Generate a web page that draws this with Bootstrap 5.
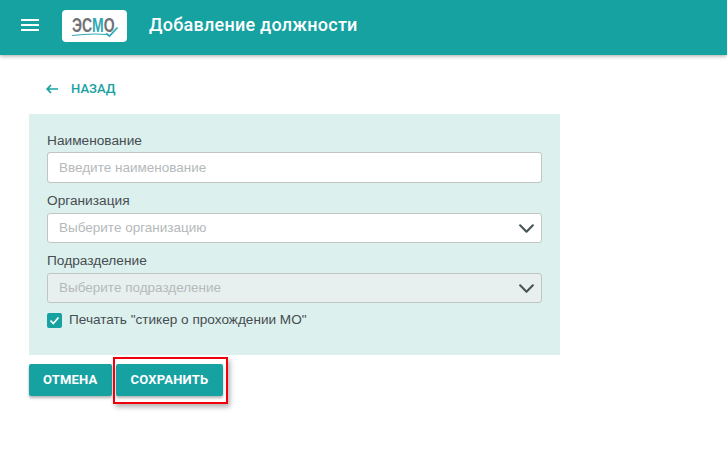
<!DOCTYPE html>
<html lang="ru">
<head>
<meta charset="utf-8">
<title>Добавление должности</title>
<link href="https://cdn.jsdelivr.net/npm/bootstrap@5.3.0/dist/css/bootstrap.min.css" rel="stylesheet">
<style>
html, body { height: 100%; }
body { font-family: Roboto, "Liberation Sans", sans-serif; background: #fff; color: #3c4448; overflow: hidden; }
.app-bar { height: 55px; background: #17a2a2; padding: 0 0 3px 21px; gap: 23px; box-shadow: 0 1px 4px rgba(0,0,0,.35); }
.burger { display: block; width: 18px; height: 12px; padding: 0; border: 0; background: none; margin-bottom: 2px; }
.logo-tile { display: block; width: 65px; height: 32px; background: #fff; border-radius: 4px; }
.app-title { font-size: 18px; font-weight: 500; color: #fff; margin: 0 0 2px -1px; line-height: 1; letter-spacing: .25px; }
.page-body { padding: 0 0 0 29px; width: 560px; }
.back-link { color: #17a2a2; font-size: 13px; font-weight: 500; letter-spacing: .05px; text-decoration: none; height: 18px; margin: 25px 0 16px 17px; gap: 13px; line-height: 18px; }
.form-panel { background: #dcf0ee; height: 241px; padding: 17px 18px 0 18px; }
.field-label { display: block; font-family: "Liberation Sans", Arial, sans-serif; font-size: 13.700px; line-height: 20px; margin: 0 0 1px; color: #474d50; }
.field-gap { margin-bottom: 9px; }
.field-gap + div .field-label { margin-bottom: 2px; margin-top: -1px; }
.field-ctl.form-control, .field-ctl.form-select { font-family: "Liberation Sans", Arial, sans-serif; font-size: 13.500px; height: 31px; padding: 0 11px 1px; border: 1px solid #c2c4c4; border-radius: 3px; color: #3c4448; line-height: 28px; box-shadow: none; }
.field-ctl.slim { height: 30px; }
.field-ctl.form-select { background-size: 17px 17px; background-position: right 6px center; padding-right: 30px; background-image: url("data:image/svg+xml,%3csvg xmlns='http://www.w3.org/2000/svg' viewBox='0 0 16 16'%3e%3cpath fill='none' stroke='%23495457' stroke-linecap='round' stroke-linejoin='round' stroke-width='2' d='m2 5 6 6 6-6'/%3e%3c/svg%3e"); }
.field-ctl::placeholder { color: #b5b9ba; opacity: 1; }
.field-ctl.placeholder-state { color: #b5b9ba; }
.field-ctl.form-select:disabled { background-color: #e8f0ef; color: #b5b9ba; opacity: 1; }
.tick-row { margin-top: 9px; gap: 7px; height: 16px; }
.tick-box { display: block; width: 15px; height: 15px; flex: none; }
.tick-label { font-family: "Liberation Sans", Arial, sans-serif; font-size: 13.600px; line-height: 16px; color: #474d50; }
.action-row { margin-top: 9px; gap: 4px; }
.action-btn.btn { background: #17a2a2; border: 0; color: #fff; font-size: 13px; font-weight: 700; height: 32px; padding: 0 14px; line-height: 32px; border-radius: 2px; letter-spacing: .2px; box-shadow: 0 2px 3px rgba(0,0,0,.3); }
.action-btn.wide-btn { padding: 0 15px; }
.mark-wrap { display: block; }
.mark-frame { position: absolute; left: -3px; top: -7px; width: 115px; height: 47px; border: 2px solid #f0000a; box-shadow: 2px 3px 5px rgba(0,0,0,.3); pointer-events: none; }
</style>
</head>
<body>
<header class="app-bar d-flex align-items-center">
  <button class="burger" type="button" aria-label="Меню">
    <svg width="18" height="12" viewBox="0 0 18 12" class="d-block"><path fill="#fff" d="M0 0h18v2H0zM0 5h18v2H0zM0 10h18v2H0z"/></svg>
  </button>
  <a class="logo-tile" href="#" aria-label="ЭСМО">
    <svg width="65" height="32" viewBox="0 0 65 32" class="d-block">
      <text transform="translate(10 22) scale(.7 1)" font-family="Liberation Sans, sans-serif" font-size="20" font-weight="700" fill="#6f7173">ЭС<tspan fill="#2fa9b4">М</tspan>О</text>
      <path fill="none" stroke="#2fa9b4" stroke-width="1.200" d="M10 25.500c12-1.500 26-1.800 35-1"/>
      <path fill="none" stroke="#2fa9b4" stroke-width="1.800" d="M44 23.500l3.500 2.500 8-8.500"/>
    </svg>
  </a>
  <h1 class="app-title">Добавление должности</h1>
</header>
<main class="page-body">
  <a class="back-link d-inline-flex align-items-center" href="#">
    <svg width="12" height="10" viewBox="0 0 12 10"><path fill="none" stroke="#17a2a2" stroke-width="1.700" d="M12 5H1.500M5 1 1.200 5 5 9"/></svg>
    <span>НАЗАД</span>
  </a>
  <form class="form-panel">
    <div class="field-gap">
      <label class="field-label" for="f1">Наименование</label>
      <input id="f1" class="form-control field-ctl" type="text" placeholder="Введите наименование">
    </div>
    <div class="field-gap">
      <label class="field-label" for="f2">Организация</label>
      <select id="f2" class="form-select field-ctl slim placeholder-state"><option>Выберите организацию</option></select>
    </div>
    <div>
      <label class="field-label" for="f3">Подразделение</label>
      <select id="f3" class="form-select field-ctl slim placeholder-state" disabled><option>Выберите подразделение</option></select>
    </div>
    <div class="tick-row d-flex align-items-center">
      <svg class="tick-box" viewBox="0 0 15 15"><rect width="15" height="15" rx="2" fill="#17a2a2"/><path fill="none" stroke="#fff" stroke-width="1.800" d="M3.500 7.500l2.800 3 5.200-6"/></svg>
      <span class="tick-label">Печатать "стикер о прохождении МО"</span>
    </div>
  </form>
  <div class="action-row d-flex">
    <button class="btn action-btn" type="button">ОТМЕНА</button>
    <div class="mark-wrap position-relative">
      <button class="btn action-btn wide-btn" type="button">СОХРАНИТЬ</button>
      <div class="mark-frame"></div>
    </div>
  </div>
</main>
<script src="https://cdn.jsdelivr.net/npm/bootstrap@5.3.0/dist/js/bootstrap.bundle.min.js"></script>
</body>
</html>
